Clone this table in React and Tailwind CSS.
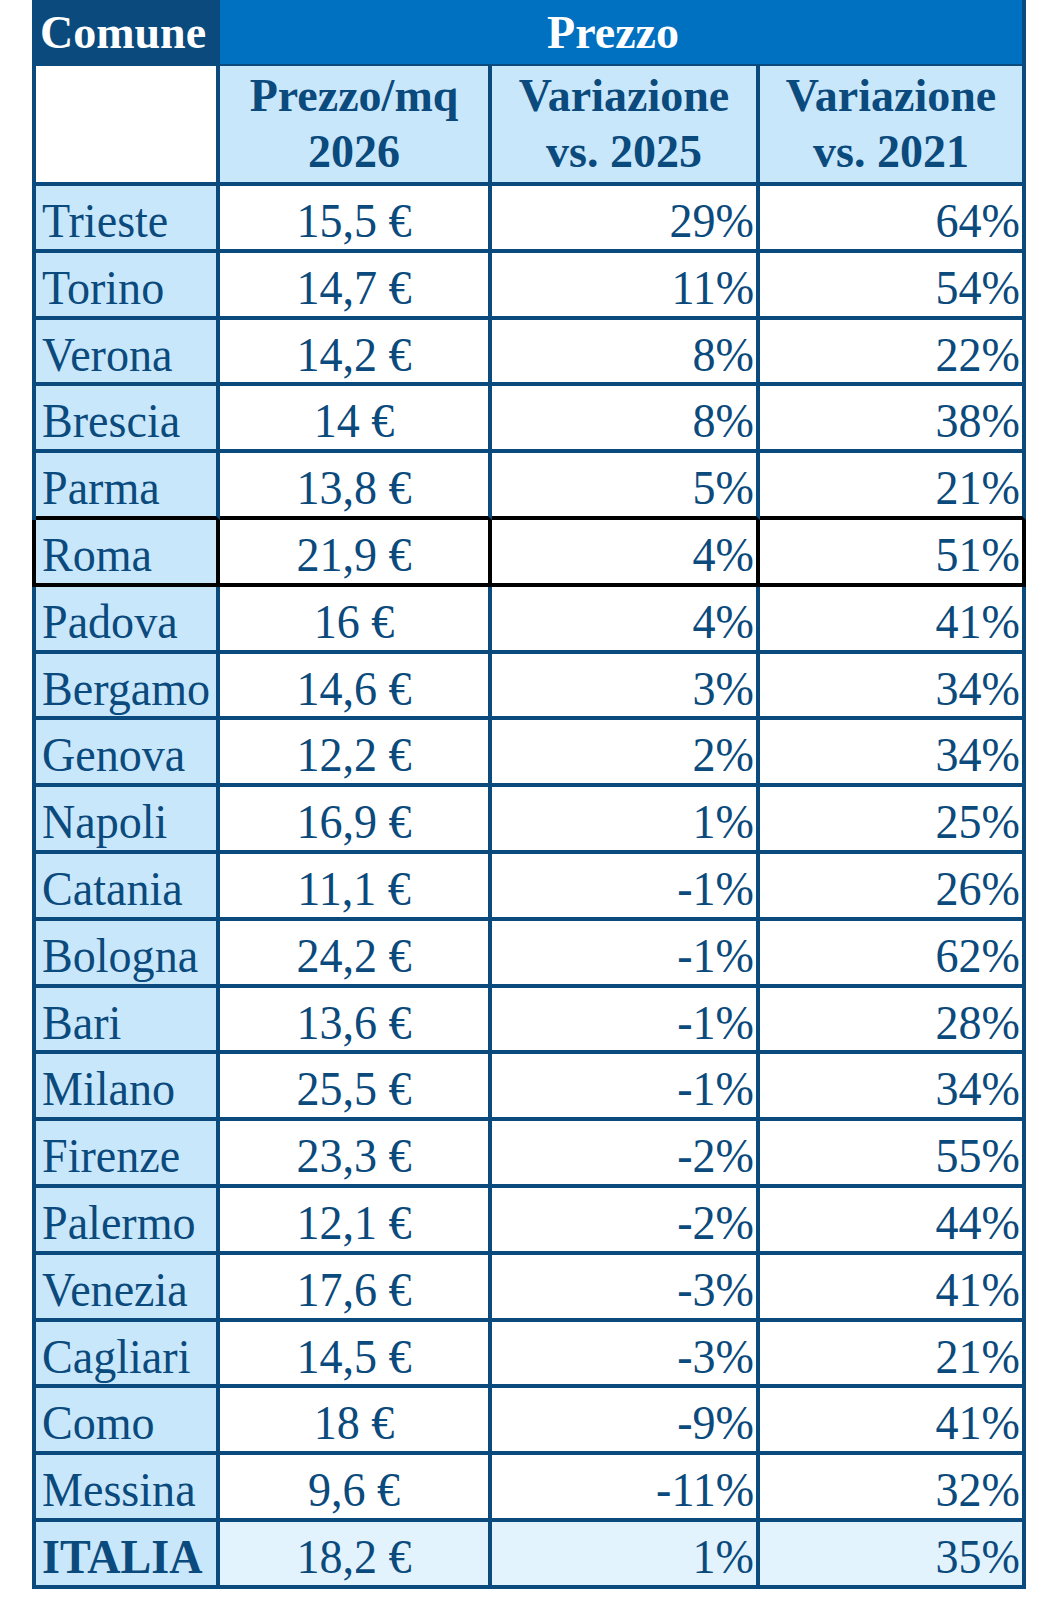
import React from "react";

const rows = [
  ["Trieste", "15,5 €", "29%", "64%"],
  ["Torino", "14,7 €", "11%", "54%"],
  ["Verona", "14,2 €", "8%", "22%"],
  ["Brescia", "14 €", "8%", "38%"],
  ["Parma", "13,8 €", "5%", "21%"],
  ["Roma", "21,9 €", "4%", "51%"],
  ["Padova", "16 €", "4%", "41%"],
  ["Bergamo", "14,6 €", "3%", "34%"],
  ["Genova", "12,2 €", "2%", "34%"],
  ["Napoli", "16,9 €", "1%", "25%"],
  ["Catania", "11,1 €", "-1%", "26%"],
  ["Bologna", "24,2 €", "-1%", "62%"],
  ["Bari", "13,6 €", "-1%", "28%"],
  ["Milano", "25,5 €", "-1%", "34%"],
  ["Firenze", "23,3 €", "-2%", "55%"],
  ["Palermo", "12,1 €", "-2%", "44%"],
  ["Venezia", "17,6 €", "-3%", "41%"],
  ["Cagliari", "14,5 €", "-3%", "21%"],
  ["Como", "18 €", "-9%", "41%"],
  ["Messina", "9,6 €", "-11%", "32%"],
];

const cols = "grid grid-cols-[184px_272px_268px_266px]";

// the sheet text is a bit narrower than plain Times, so squeeze it slightly
const Txt = ({ children, origin }) => (
  <span className={`inline-block whitespace-nowrap scale-x-[0.96] ${origin}`}>{children}</span>
);

function DataRow({ row, highlight, beforeHighlight }) {
  const [city, price, v25, v21] = row;
  // Roma is boxed in black, so the row above it gets a black bottom edge too
  const edge = highlight ? "border-black" : "border-[#0b4a7c]";
  const bottom = highlight || beforeHighlight ? "border-b-black" : "border-b-[#0b4a7c]";
  return (
    <div className={`${cols} h-[66.8px] border-l-4 ${edge} text-[48px] leading-[48px]`}>
      <div className={`border-r-4 border-b-4 ${edge} ${bottom} bg-[#c9e7fb] pl-[6px] pt-[11px]`}>
        <Txt origin="origin-left">{city}</Txt>
      </div>
      <div className={`border-r-4 border-b-4 ${edge} ${bottom} bg-white text-center pt-[11px]`}>
        <Txt origin="origin-center">{price}</Txt>
      </div>
      <div className={`border-r-4 border-b-4 ${edge} ${bottom} bg-white text-right pr-[2px] pt-[11px]`}>
        <Txt origin="origin-right">{v25}</Txt>
      </div>
      <div className={`border-r-4 border-b-4 ${edge} ${bottom} bg-white text-right pr-[2px] pt-[11px]`}>
        <Txt origin="origin-right">{v21}</Txt>
      </div>
    </div>
  );
}

export default function App() {
  return (
    <div className="bg-white min-h-[1600px] pl-[32px] font-['Liberation_Serif',serif] text-[#0b4a7c]">
      <div className="w-[994px]">
        {/* top header */}
        <div className="grid grid-cols-[188px_806px] h-[66px] border-b-4 border-[#0b4a7c] text-white font-bold text-[46px] leading-[62px]">
          <div className="bg-[#0a4a7c] pl-[8px] pt-[2px]">Comune</div>
          <div className="bg-[#0070c0] border-r-4 border-[#0b4a7c] text-center pr-[16px] pt-[2px]">Prezzo</div>
        </div>

        {/* sub header */}
        <div className={`${cols} h-[120px] border-l-4 border-[#0b4a7c] font-bold text-[46px] leading-[56px]`}>
          <div className="bg-white border-r-4 border-b-4 border-[#0b4a7c]" />
          <div className="bg-[#c9e7fb] border-r-4 border-b-4 border-[#0b4a7c] flex flex-col justify-center items-center">
            <span>Prezzo/mq</span>
            <span>2026</span>
          </div>
          <div className="bg-[#c9e7fb] border-r-4 border-b-4 border-[#0b4a7c] flex flex-col justify-center items-center">
            <span>Variazione</span>
            <span>vs. 2025</span>
          </div>
          <div className="bg-[#c9e7fb] border-r-4 border-b-4 border-[#0b4a7c] flex flex-col justify-center items-center">
            <span>Variazione</span>
            <span>vs. 2021</span>
          </div>
        </div>

        {rows.map((r, i) => (
          <DataRow
            key={r[0]}
            row={r}
            highlight={r[0] === "Roma"}
            beforeHighlight={rows[i + 1] && rows[i + 1][0] === "Roma"}
          />
        ))}

        {/* total */}
        <div className={`${cols} h-[67px] border-l-4 border-[#0b4a7c] text-[48px] leading-[48px]`}>
          <div className="border-r-4 border-b-4 border-[#0b4a7c] bg-[#c9e7fb] pl-[6px] pt-[11px] font-bold">
            <Txt origin="origin-left">ITALIA</Txt>
          </div>
          <div className="border-r-4 border-b-4 border-[#0b4a7c] bg-[#e3f3fd] text-center pt-[11px]">
            <Txt origin="origin-center">18,2 €</Txt>
          </div>
          <div className="border-r-4 border-b-4 border-[#0b4a7c] bg-[#e3f3fd] text-right pr-[2px] pt-[11px]">
            <Txt origin="origin-right">1%</Txt>
          </div>
          <div className="border-r-4 border-b-4 border-[#0b4a7c] bg-[#e3f3fd] text-right pr-[2px] pt-[11px]">
            <Txt origin="origin-right">35%</Txt>
          </div>
        </div>
      </div>
    </div>
  );
}
